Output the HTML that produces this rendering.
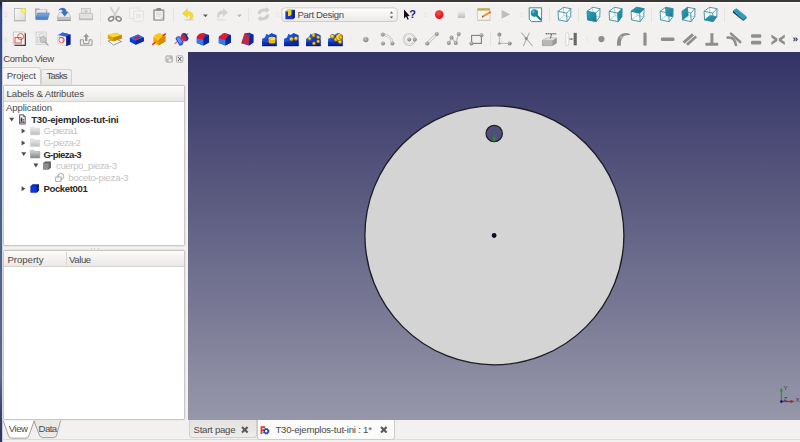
<!DOCTYPE html>
<html lang="es">
<head>
<meta charset="utf-8">
<title>FreeCAD - T30-ejemplos-tut-ini</title>
<style>
html,body{margin:0;padding:0;}
body{width:800px;height:442px;overflow:hidden;position:relative;background:#f2f1f0;
 font-family:"Liberation Sans",sans-serif;font-size:9.6px;color:#4a4a4a;}
.abs{position:absolute;}
.t{position:absolute;white-space:nowrap;line-height:12px;height:12px;}
.b{font-weight:bold;color:#2b2b2b;}
.g{color:#c4c4c4;}
#topstrip{left:0;top:0;width:800px;height:2px;background:#3b3a36;}
#leftstrip{left:0;top:2px;width:2px;height:440px;background:linear-gradient(to bottom,#14204a 0%,#34487f 2%,#40568c 23%,#4a6088 45%,#526488 68%,#5a6a8c 85%,#3a4670 93%,#2b3560 100%);box-shadow:0.5px 0 0.6px rgba(80,100,150,0.5);}
#view3d{left:188.4px;top:52px;width:611.6px;height:368px;
 background:linear-gradient(to bottom,#333366 0%,#9797aa 100%);}
.panel{position:absolute;background:#fff;border:1px solid #cbc8c3;box-sizing:border-box;border-radius:2px;box-shadow:0 0 0 0.6px #e0deda;}
.hdr{position:absolute;left:0;top:0;right:0;height:15px;background:linear-gradient(#fbfbfa,#ebe9e6);border-bottom:1px solid #d6d3ce;}
.sep{position:absolute;width:1px;height:14px;background:#dcdad6;}
.grip{position:absolute;width:2px;height:5px;border-top:1px solid #cfcdc9;border-bottom:1px solid #cfcdc9;}
.grip:after{content:"";position:absolute;left:0;top:2px;width:2px;height:1px;background:#cfcdc9;}
.ic{position:absolute;width:16px;height:16px;overflow:visible;}
</style>
</head>
<body>
<div id="topstrip" class="abs"></div>
<div class="abs" style="left:2px;top:2px;width:798px;height:1.5px;background:linear-gradient(#fcfcfc,#f2f1f0);"></div>
<div id="leftstrip" class="abs"></div>

<!-- TOOLBARS -->
<div id="toolbars" class="abs" style="left:0;top:0;width:800px;height:52px;">
<svg class="abs" style="left:0;top:0;" width="800" height="52" viewBox="0 0 800 52">
<defs>
 <linearGradient id="pg" x1="0" y1="0" x2="1" y2="1"><stop offset="0" stop-color="#fafafa"/><stop offset="1" stop-color="#dcdcdc"/></linearGradient>
 <linearGradient id="blu" x1="0" y1="0" x2="0" y2="1"><stop offset="0" stop-color="#7fb0e4"/><stop offset="1" stop-color="#3f78bd"/></linearGradient>
 <linearGradient id="gry" x1="0" y1="0" x2="0" y2="1"><stop offset="0" stop-color="#ececec"/><stop offset="1" stop-color="#b4b4b4"/></linearGradient>
 <linearGradient id="yel" x1="0" y1="0" x2="0" y2="1"><stop offset="0" stop-color="#ffe23a"/><stop offset="1" stop-color="#e0a800"/></linearGradient>
 <linearGradient id="teal" x1="0" y1="0" x2="1" y2="1"><stop offset="0" stop-color="#2fa3c0"/><stop offset="1" stop-color="#13788f"/></linearGradient>
 <linearGradient id="bb" x1="0" y1="0" x2="1" y2="1"><stop offset="0" stop-color="#2a7af0"/><stop offset="0.5" stop-color="#1040d0"/><stop offset="1" stop-color="#061a8a"/></linearGradient>
 <radialGradient id="gold" cx="0.4" cy="0.35" r="0.75"><stop offset="0" stop-color="#ffe94a"/><stop offset="1" stop-color="#c89200"/></radialGradient>
 <linearGradient id="cbg" x1="0" y1="0" x2="0" y2="1"><stop offset="0" stop-color="#ffffff"/><stop offset="1" stop-color="#ebe9e7"/></linearGradient>
 <radialGradient id="glow"><stop offset="0" stop-color="#ffffd0"/><stop offset="0.45" stop-color="#f4ea30"/><stop offset="1" stop-color="#f4ea30" stop-opacity="0"/></radialGradient>
 <radialGradient id="sph" cx="0.4" cy="0.35" r="0.7"><stop offset="0" stop-color="#c4c4c4"/><stop offset="1" stop-color="#7c7c7c"/></radialGradient>
 <radialGradient id="red" cx="0.4" cy="0.35" r="0.7"><stop offset="0" stop-color="#ff4a4a"/><stop offset="1" stop-color="#dc0a16"/></radialGradient>
 <g id="dot"><circle r="2" fill="url(#sph)"/></g>
 <!-- cube wireframe: origin = front-face top-left -->
 <g id="cubew" fill="none" stroke="#2a8ea6" stroke-width="0.9" stroke-linejoin="round">
  <path d="M0 4.2 L3.6 0 H13.4 V10 L10 14.2 H0.6 Z" fill="#ffffff"/>
  <path d="M0 4.2 H10.2 L10 14.2 M10.2 4.2 L13.4 0" />
  <path d="M3.6 0 L3.9 9.8 H13.4 M3.9 9.8 L0.6 14.2" stroke-width="0.6" stroke="#5fb0c2"/>
 </g>
<g id="grp"><rect x="0" y="0" width="2.4" height="0.9"/><rect x="0" y="1.9" width="2.4" height="0.9"/><rect x="0" y="3.8" width="2.4" height="0.9"/></g>
</defs>

<!-- separators -->
<g fill="#e6e4e1">
 <rect x="100" y="8" width="1" height="14"/><rect x="173" y="8" width="1" height="14"/><rect x="248" y="8" width="1" height="14"/>
 <rect x="549" y="8" width="1" height="14"/><rect x="578" y="8" width="1" height="14"/><rect x="651" y="8" width="1" height="14"/><rect x="724" y="8" width="1" height="14"/>
 <rect x="100" y="32" width="1" height="14"/><rect x="490" y="32" width="1" height="14"/>
</g>
<!-- grips -->

<use href="#grp" x="4.6" y="12.2" fill="#e0deda"/><use href="#grp" x="4.6" y="37" fill="#e0deda"/>
<use href="#grp" x="276.4" y="12.2" fill="#e8e6e3"/><use href="#grp" x="424.2" y="12.2" fill="#e8e6e3"/><use href="#grp" x="520.4" y="12.2" fill="#e8e6e3"/>
<use href="#grp" x="350" y="37" fill="#e8e6e3"/><use href="#grp" x="586" y="37" fill="#e8e6e3"/>

<!-- ROW 1 -->
<!-- new -->
<rect x="14.4" y="8.4" width="10.8" height="12.2" fill="url(#pg)" stroke="#a9a9a9" stroke-width="0.7"/>
<rect x="13.6" y="20.6" width="12.4" height="0.8" fill="#b5b5b5"/>
<circle cx="23.6" cy="10.6" r="3.6" fill="url(#glow)"/>
<!-- open -->
<path d="M35.2 8.6 h4 l1 1 h7 v9.6 h-12 z" fill="#9a9a9a"/>
<path d="M36.4 9.6 h10 v6 h-10 z" fill="#e8e8e8"/>
<path d="M37.6 13 h11.8 l-1.8 6.6 h-11.6 z" fill="url(#blu)" stroke="#3a6eae" stroke-width="0.5"/>
<!-- save -->
<path d="M59.600 12.400 h8.800 l2.400 5 h-13.600 z" fill="#ececec" stroke="#9c9c9c" stroke-width="0.500"/>
<rect x="57.200" y="17.400" width="13.600" height="3.400" fill="#b4b4b4"/>
<rect x="57.200" y="20.200" width="13.600" height="0.800" fill="#8a8a8a"/>
<rect x="58.400" y="18.400" width="11.200" height="0.700" fill="#d8d8d8"/>
<path d="M58 10.600 Q60.400 6.800 64.600 8.200 Q66.600 9.200 66.600 11.800 H68.600 L64.700 16.400 L60.800 11.800 H62.800 Q62.600 10 60.800 9.700 Q59.400 9.700 58 10.600 Z" fill="#3874bc"/>
<!-- print (disabled) -->
<g opacity="0.8">
<rect x="81.6" y="8.4" width="8.8" height="5" fill="#e4e4e4" stroke="#a8a8a8" stroke-width="0.6"/>
<path d="M79.4 13.4 h13.2 v6.4 h-13.2 z" fill="url(#gry)" stroke="#9a9a9a" stroke-width="0.6"/>
<rect x="80.4" y="16.6" width="11.2" height="1" fill="#f6f6f6"/>
<path d="M86 9.2 v3 m-1.4 -1.4 l1.4 1.6 l1.4 -1.6" stroke="#9a9a9a" stroke-width="0.7" fill="none"/>
</g>
<!-- cut -->
<g>
<path d="M110.800 7.800 L116.400 17 M119 7.800 L113.400 17" stroke="#dadada" stroke-width="2.200" stroke-linecap="round"/>
<path d="M110.800 7.800 L116.400 17 M119 7.800 L113.400 17" stroke="#c2c2c2" stroke-width="0.500"/>
<ellipse cx="111.200" cy="18.800" rx="2.700" ry="2" fill="none" stroke="#8a8a8a" stroke-width="1.500" transform="rotate(-30 111.200 18.800)"/>
<ellipse cx="118.600" cy="18.800" rx="2.700" ry="2" fill="none" stroke="#8a8a8a" stroke-width="1.500" transform="rotate(30 118.600 18.800)"/>
</g>
<!-- copy (disabled) -->
<g opacity="0.5">
<rect x="129.8" y="8" width="9.2" height="10.4" fill="#f6f6f6" stroke="#c0c0c0" stroke-width="0.6"/>
<path d="M133.8 11 h9.6 v8.2 l-2 2 h-7.6 z" fill="#f8f8f8" stroke="#b8b8b8" stroke-width="0.6"/>
<rect x="136" y="13.6" width="5.2" height="4.4" fill="#dedede"/>
</g>
<!-- paste -->
<rect x="153.2" y="9.2" width="11.2" height="11.6" rx="0.8" fill="#9c9c9c"/>
<rect x="154.8" y="11" width="8" height="8.4" fill="#f0f0f0"/>
<rect x="156.4" y="8" width="4.8" height="2.6" rx="0.8" fill="#8a8a8a"/>
<path d="M156.2 13 h5 M156.2 14.6 h5 M156.2 16.2 h4" stroke="#d0d0d0" stroke-width="0.7"/>
<path d="M162.8 16.8 v2.6 h-2.6 z" fill="#c4c4c4"/>
<!-- undo -->
<ellipse cx="189" cy="19.8" rx="5" ry="1.1" fill="#dcdad6"/>
<path d="M182.4 13.6 L187.4 8.8 V11.4 Q193.2 11.6 193 16.4 Q192.8 19.2 189.6 19.6 Q191.2 17.4 190 15.8 Q189 14.8 187.4 15 V17.6 Z" fill="#f3dc2e" stroke="#e6c820" stroke-width="0.5"/>
<path d="M203 14.400 h4.800 l-2.400 2.800 z" fill="#5c5b58"/>
<!-- redo (disabled) -->
<ellipse cx="221" cy="19.8" rx="5" ry="1" fill="#e6e4e1"/>
<path d="M228 12.6 L223 8.2 V10.6 Q217.2 10.8 217 15.4 Q217 17.6 219 18.2 Q218.6 16.2 220 15 Q221.2 14.2 223 14.4 V17 Z" fill="#d2d2d2"/>
<path d="M237 14.4 h4.8 l-2.4 2.8 z" fill="#b9b7b3"/>
<!-- refresh (disabled) -->
<g fill="#cecece">
<path d="M257.6 14 q0.4 -5.4 6 -5.6 h2.4 v-1.4 l3.6 3 l-3.6 3 v-1.6 h-2.4 q-2.6 0.2 -3 2.6 z"/>
<path d="M269.4 14.6 q-0.4 5.4 -6 5.6 h-2.4 v1.4 l-3.6 -3 l3.6 -3 v1.6 h2.4 q2.6 -0.2 3 -2.6 z"/>
</g>
<!-- combobox -->
<rect x="281.9" y="7.9" width="115.4" height="13.6" rx="3" fill="url(#cbg)" stroke="#c6c3be" stroke-width="0.8"/>
<path d="M285.4 11.6 l2 -1.8 h7.4 v7.6 l-2 1.8 h-7.4 z" fill="#1536c6"/>
<path d="M292.8 11.6 l2 -1.8 v7.6 l-2 1.8 z" fill="#081a80"/>
<path d="M285.4 11.6 l2 -1.8 h4 v5 l-1.4 1.2 h-2 v-4.4 z" fill="#f2d21c"/>
<path d="M389.8 13.6 l1.7 -2 l1.7 2 z M389.8 16.6 l1.7 2 l1.7 -2 z" fill="#5a5955"/>
<!-- whats this -->
<path d="M404 9.4 L404 18.4 L406 16.6 L407.6 19.8 L408.8 19.2 L407.4 16.2 L409.8 16 Z" fill="#101010"/>
<text x="409.200" y="18" font-family="Liberation Sans, sans-serif" font-weight="bold" font-size="11" fill="#1a1a8c">?</text>
<!-- record -->
<circle cx="439.2" cy="14.6" r="4.3" fill="url(#red)"/>
<!-- stop -->
<rect x="457.8" y="11.2" width="7.2" height="6.8" fill="url(#gry)" opacity="0.85"/>
<!-- macro edit -->
<rect x="477.4" y="8.6" width="12.6" height="11.8" rx="0.8" fill="#f4f3f0" stroke="#bab7b0" stroke-width="0.6"/>
<rect x="477.4" y="8.4" width="12.6" height="2.2" fill="#c7ab48"/>
<rect x="477" y="19.8" width="13.4" height="1" fill="#c9c7c2"/>
<path d="M481.6 17.6 l1 -2.2 l6.2 -3.6 l1.2 1.6 l-6.2 3.6 z" fill="#e79a2c"/>
<path d="M488.8 11.8 l1.2 -0.6 l1 1.6 l-1 0.6 z" fill="#d83a3a"/>
<path d="M481.6 17.6 l1 -2.2 l0.9 1.5 z" fill="#5a4a36"/>
<!-- play (disabled) -->
<path d="M501.6 10 L510.2 14.4 L501.6 18.8 Z" fill="#bdbdbd"/>
<!-- zoom fit -->
<path d="M529.2 7.8 H541.6 V21.6 H531.6 L529.2 19.2 Z" fill="#f6fbfc" stroke="#23849c" stroke-width="0.9"/>
<path d="M537 15.8 L540.4 19.4" stroke="#13788f" stroke-width="2" stroke-linecap="round"/>
<circle cx="534.4" cy="13" r="3.7" fill="url(#teal)"/>
<circle cx="533.4" cy="11.8" r="1.2" fill="#6cc6da" opacity="0.8"/>
<!-- view cubes -->
<path d="M558.0 11.3 L563.4 7.3 L570.9 8.7 L570.7 16.7 L567.1 21.6 L558.5 19.9 Z" fill="#fdfefe" stroke="none"/>
<path d="M563.4 7.3 L564.0 15.6 L570.7 16.7 M564.0 15.6 L558.5 19.9" fill="none" stroke="#8dbcc8" stroke-width="0.7"/>
<path d="M558.0 11.3 L566.6 13.1 L567.1 21.6 L558.5 19.9 Z M558.0 11.3 L563.4 7.3 L570.9 8.7 L570.7 16.7 L567.1 21.6 M566.6 13.1 L570.9 8.7" fill="none" stroke="#3a8ca2" stroke-width="0.9" stroke-linejoin="round"/>
<path d="M587.1 11.3 L592.5 7.3 L600.0 8.7 L599.8 16.7 L596.2 21.6 L587.6 19.9 Z" fill="#fdfefe" stroke="none"/>
<path d="M592.5 7.3 L593.1 15.6 L599.8 16.7 M593.1 15.6 L587.6 19.9" fill="none" stroke="#8dbcc8" stroke-width="0.7"/>
<path d="M587.1 11.3 L595.7 13.1 L596.2 21.6 L587.6 19.9 Z M587.1 11.3 L592.5 7.3 L600.0 8.7 L599.8 16.7 L596.2 21.6 M595.7 13.1 L600.0 8.7" fill="none" stroke="#3a8ca2" stroke-width="0.9" stroke-linejoin="round"/>
<path d="M587.1 11.3 L595.7 13.1 L596.2 21.6 L587.6 19.9 Z" fill="url(#teal)" stroke="#1d7f97" stroke-width="0.5"/>
<path d="M609.1 11.3 L614.5 7.3 L622.0 8.7 L621.8 16.7 L618.2 21.6 L609.6 19.9 Z" fill="#fdfefe" stroke="none"/>
<path d="M614.5 7.3 L615.1 15.6 L621.8 16.7 M615.1 15.6 L609.6 19.9" fill="none" stroke="#8dbcc8" stroke-width="0.7"/>
<path d="M609.1 11.3 L617.7 13.1 L618.2 21.6 L609.6 19.9 Z M609.1 11.3 L614.5 7.3 L622.0 8.7 L621.8 16.7 L618.2 21.6 M617.7 13.1 L622.0 8.7" fill="none" stroke="#3a8ca2" stroke-width="0.9" stroke-linejoin="round"/>
<path d="M617.7 13.1 L622.0 8.7 L621.8 16.7 L618.2 21.6 Z" fill="url(#teal)" stroke="#1d7f97" stroke-width="0.5"/>
<path d="M631.1 11.3 L636.5 7.3 L644.0 8.7 L643.8 16.7 L640.2 21.6 L631.6 19.9 Z" fill="#fdfefe" stroke="none"/>
<path d="M636.5 7.3 L637.1 15.6 L643.8 16.7 M637.1 15.6 L631.6 19.9" fill="none" stroke="#8dbcc8" stroke-width="0.7"/>
<path d="M631.1 11.3 L639.7 13.1 L640.2 21.6 L631.6 19.9 Z M631.1 11.3 L636.5 7.3 L644.0 8.7 L643.8 16.7 L640.2 21.6 M639.7 13.1 L644.0 8.7" fill="none" stroke="#3a8ca2" stroke-width="0.9" stroke-linejoin="round"/>
<path d="M631.1 11.3 L639.7 13.1 L644.0 8.7 L636.5 7.3 Z" fill="url(#teal)" stroke="#1d7f97" stroke-width="0.5"/>
<path d="M660.1 11.3 L665.5 7.3 L673.0 8.7 L672.8 16.7 L669.2 21.6 L660.6 19.9 Z" fill="#fdfefe" stroke="none"/>
<path d="M665.5 7.3 L666.1 15.6 L672.8 16.7 M666.1 15.6 L660.6 19.9" fill="none" stroke="#8dbcc8" stroke-width="0.7"/>
<path d="M665.5 7.3 L673.0 8.7 L672.8 16.7 L666.1 15.6 Z" fill="url(#teal)" stroke="#1d7f97" stroke-width="0.5"/>
<path d="M660.1 11.3 L668.7 13.1 L669.2 21.6 L660.6 19.9 Z M660.1 11.3 L665.5 7.3 L673.0 8.7 L672.8 16.7 L669.2 21.6 M668.7 13.1 L673.0 8.7" fill="none" stroke="#3a8ca2" stroke-width="0.9" stroke-linejoin="round"/>
<path d="M682.1 11.3 L687.5 7.3 L695.0 8.7 L694.8 16.7 L691.2 21.6 L682.6 19.9 Z" fill="#fdfefe" stroke="none"/>
<path d="M687.5 7.3 L688.1 15.6 L694.8 16.7 M688.1 15.6 L682.6 19.9" fill="none" stroke="#8dbcc8" stroke-width="0.7"/>
<path d="M682.1 11.3 L687.5 7.3 L688.1 15.6 L682.6 19.9 Z" fill="url(#teal)" stroke="#1d7f97" stroke-width="0.5"/>
<path d="M682.1 11.3 L690.7 13.1 L691.2 21.6 L682.6 19.9 Z M682.1 11.3 L687.5 7.3 L695.0 8.7 L694.8 16.7 L691.2 21.6 M690.7 13.1 L695.0 8.7" fill="none" stroke="#3a8ca2" stroke-width="0.9" stroke-linejoin="round"/>
<path d="M704.1 11.3 L709.5 7.3 L717.0 8.7 L716.8 16.7 L713.2 21.6 L704.6 19.9 Z" fill="#fdfefe" stroke="none"/>
<path d="M709.5 7.3 L710.1 15.6 L716.8 16.7 M710.1 15.6 L704.6 19.9" fill="none" stroke="#8dbcc8" stroke-width="0.7"/>
<path d="M704.6 19.9 L713.2 21.6 L716.8 16.7 L710.1 15.6 Z" fill="url(#teal)" stroke="#1d7f97" stroke-width="0.5"/>
<path d="M704.1 11.3 L712.7 13.1 L713.2 21.6 L704.6 19.9 Z M704.1 11.3 L709.5 7.3 L717.0 8.7 L716.8 16.7 L713.2 21.6 M712.7 13.1 L717.0 8.7" fill="none" stroke="#3a8ca2" stroke-width="0.9" stroke-linejoin="round"/>
<!-- measure -->
<path d="M733 10.6 L736.4 8.2 L746.4 16.2 L743 19.4 Z" fill="#2f9dbb"/>
<path d="M733 10.6 L743 19.4 L743.4 21 L732.8 12.4 Z" fill="#1c3c46"/>
<path d="M743 19.4 L746.4 16.2 L746.6 18 L743.4 21 Z" fill="#14677c"/>
<!-- ROW 2 -->
<!-- new sketch -->
<rect x="14.4" y="33" width="11.6" height="13" rx="1" fill="#3a3a3a"/>
<rect x="13.4" y="32" width="11.4" height="12.8" rx="0.8" fill="#f4f4f4" stroke="#9a9a9a" stroke-width="0.5"/>
<g fill="none" stroke="#e8402c" stroke-width="0.9"><rect x="15" y="37.6" width="6.2" height="5.4"/><circle cx="20.6" cy="36.6" r="3"/></g>
<!-- view sketch (disabled) -->
<rect x="36" y="32" width="10.4" height="12.4" fill="#ececec" stroke="#c4c4c4" stroke-width="0.6"/>
<g fill="none" stroke="#cfcfcf" stroke-width="0.8"><rect x="37.4" y="37.4" width="4.6" height="4.6"/><circle cx="41.6" cy="36" r="2.6"/></g>
<circle cx="43" cy="39.6" r="3.1" fill="#c8c8c8" stroke="#a8a8a8" stroke-width="0.7"/>
<path d="M45.2 42 L48 45.2" stroke="#a0a0a0" stroke-width="1.2" stroke-linecap="round"/>
<!-- map sketch -->
<path d="M62.4 32.6 L70.4 34.6 V44.4 L66 46 L62.4 44 Z" fill="#0b2fc0"/>
<path d="M57.4 35.2 L62.4 32.6 L70.4 34.6 L65.6 36.8 Z" fill="#2e62e6"/>
<path d="M66 36.8 L70.4 34.6 V44.4 L66 46 Z" fill="#061f8c"/>
<path d="M57.4 35.2 L66 36.8 V46 L57.8 43.4 Z" fill="#f6f6f6" stroke="#bbb" stroke-width="0.4"/>
<g fill="none" stroke="#e8402c" stroke-width="0.8"><circle cx="61.6" cy="40" r="2.7"/><path d="M58.6 37 l4.6 1.2 v4.2"/></g>
<!-- leave sketch -->
<path d="M80.4 39.8 h3 v3.8 h5.6 v-3.8 h3 v5.4 h-11.6 z" fill="#f2f2f2" stroke="#8e8e8e" stroke-width="0.9" stroke-linejoin="round"/>
<path d="M86.2 33.6 l3 3.4 h-1.8 v4 h-2.4 v-4 h-1.8 z" fill="#9c9c9c"/>
<!-- pad -->
<path d="M108.2 41 L116 38.8 L121.4 41.6 L113.6 45 Z" fill="#ffffff" stroke="#555" stroke-width="0.6"/>
<path d="M107.8 35 L116 32.8 L121.6 35 V38.6 L113.4 41.4 L107.8 38.8 Z" fill="#e0a400"/>
<path d="M107.8 35 L116 32.8 L121.6 35 L113.4 37.6 Z" fill="#ffd92e"/>
<path d="M113.4 37.6 L121.6 35 V38.6 L113.4 41.4 Z" fill="#c48800"/>
<!-- pocket -->
<path d="M129.8 38 L138 34.6 L143.8 37.4 V41.2 L135.6 44.8 L129.8 41.8 Z" fill="#0e3bd0"/>
<path d="M129.8 38 L138 34.6 L143.8 37.4 L135.6 40.8 Z" fill="#2f6cf0"/>
<path d="M135.6 40.8 L143.8 37.4 V41.2 L135.6 44.8 Z" fill="#082a9c"/>
<path d="M133.6 37.8 L138 36 L140.4 37.4 L136 39.4 Z" fill="#e01a2a"/>
<!-- revolution -->
<path d="M152.4 44.6 L165.6 33.8" stroke="#f01818" stroke-width="1.1"/>
<path d="M153.4 37.6 Q155 33.6 160.4 33.6 L165.4 36.2 V41.6 L158.6 45.4 L153.4 42.6 Z" fill="#f0a800"/>
<path d="M153.4 37.6 Q155 33.6 160.4 33.6 L165.4 36.2 Q160.4 36.4 158.6 40.4 Z" fill="#ffc81e"/>
<path d="M158.6 40.4 Q160.4 36.4 165.4 36.2 V41.6 L158.6 45.4 Z" fill="#d48c00"/>
<path d="M152.4 44.6 L155.4 42.2 M162.6 36.2 L165.6 33.8" stroke="#f01818" stroke-width="1.1"/>
<!-- groove -->
<path d="M174.6 43.6 L188.2 33.6" stroke="#f01818" stroke-width="1"/>
<path d="M175.4 38.6 Q177 35.4 180 36.4 L183.6 42 Q183 45.6 179.6 45.8 Z" fill="#1c50d8"/>
<path d="M176.6 38.4 Q178 36.6 179.6 37.4 L182.2 41.6 Q181.8 43.8 179.8 44 Z" fill="#5c94f4"/>
<path d="M181.4 34.4 Q183.4 32.2 186 33.6 L188.6 38 Q188.4 41 185.6 41.4 Z" fill="#0e36b4"/>
<path d="M180.4 36.6 Q181.6 33.6 184 34.4 L186.6 39 Q186 41.6 183.4 41.6 Z" fill="#e01a2a"/>
<!-- fillet -->
<g id="bcube">
<path d="M196.8 36.4 L203 33 L209 35 V42.6 L203.4 45.4 L196.8 43 Z" fill="#0e3bd0"/>
<path d="M203.4 38.4 L209 35 V42.6 L203.4 45.4 Z" fill="#08289a"/>
<path d="M196.8 38 L203.4 39.4 V45.4 L196.8 43 Z" fill="#2f7cf0"/>
</g>
<path d="M196.8 38.6 Q196.8 34.4 201 33.2 L206.4 34.2 Q203.6 35.6 203.4 39.8 Z" fill="#e01a2a"/>
<!-- chamfer -->
<use href="#bcube" x="22"/>
<path d="M218.8 38.6 L222.6 33.2 L228.6 34.4 L225.4 39.8 Z" fill="#e81a24"/>
<!-- draft -->
<path d="M245 33.2 L249.6 32.8 L253.4 34.6 V42.4 L249 45.4 L241.4 43.2 Z" fill="#0e3bd0"/>
<path d="M249.6 35 L253.4 34.6 V42.4 L249 45.4 Z" fill="#08289a"/>
<path d="M244.4 33.4 L249.6 35 L248.6 45 L241.4 43 Z" fill="#c02a44"/>
<!-- mirrored -->
<g id="bbase">
<path d="M262.100 38.800 L265 37.600 L266.400 33.800 L268.600 35 L271.600 33 L276.600 35.200 V46 H262.100 Z" fill="url(#bb)"/>
<path d="M262.100 41.600 Q269 44 276.600 40.600 V46 H262.100 Z" fill="#0a249c" opacity="0.8"/>
<path d="M262.100 45.400 H276.600 V46.200 H262.100 Z" fill="#04155c"/>
</g>
<path d="M268.6 38.4 a3.4 1.6 0 0 1 6.800 0 v3.600 a3.400 1.600 0 0 1 -6.800 0 z" fill="#e8c000"/>
<ellipse cx="272" cy="38.400" rx="3.400" ry="1.600" fill="#ffe640"/>
<path d="M263 45 L275.600 34.600" stroke="#e02a3a" stroke-width="0.6" stroke-dasharray="1.4 1"/>
<!-- linear pattern -->
<use href="#bbase" x="22"/>
<g fill="url(#gold)" stroke="#7c5e00" stroke-width="0.5"><circle cx="291.400" cy="39" r="2"/><circle cx="296" cy="38.400" r="2"/></g>
<!-- polar pattern -->
<use href="#bbase" x="44"/>
<g fill="url(#gold)" stroke="#7c5e00" stroke-width="0.5"><circle cx="309.600" cy="38.600" r="1.700"/><circle cx="313.600" cy="35.400" r="1.700"/><circle cx="318.200" cy="37.200" r="1.700"/><circle cx="318.200" cy="41.400" r="1.700"/><circle cx="314" cy="43.400" r="1.700"/></g>
<!-- multitransform -->
<use href="#bbase" x="66"/>
<g fill="url(#gold)" stroke="#7c5e00" stroke-width="0.5"><circle cx="332.400" cy="36.400" r="2"/><circle cx="336" cy="39.400" r="2"/><circle cx="340" cy="41.800" r="2"/><path d="M336 35.400 l3.200 -2 l3.200 2 v3.600 l-3.200 1.600 l-3.200 -1.600 z" fill="#ffdc1e"/><circle cx="340.600" cy="37.400" r="1.800"/></g>
<!-- point -->
<circle cx="365.800" cy="39.600" r="2.700" fill="url(#sph)"/>
<!-- arc -->
<path d="M383 34.800 Q391.600 35.400 392.200 43" fill="none" stroke="#c2c2c2" stroke-width="2.400"/><path d="M383 34.800 Q391.600 35.400 392.200 43" fill="none" stroke="#f4f4f4" stroke-width="1.100"/>
<use href="#dot" x="382.800" y="34.600"/><use href="#dot" x="383" y="43.400"/><use href="#dot" x="392.400" y="43.400"/>
<!-- circle -->
<circle cx="409.200" cy="39.400" r="5.400" fill="none" stroke="#c0c0c0" stroke-width="2.200"/><circle cx="409.200" cy="39.400" r="5.400" fill="none" stroke="#f4f4f4" stroke-width="1"/>
<use href="#dot" x="409.200" y="39.400"/><use href="#dot" x="414.800" y="39.400"/>
<!-- line -->
<path d="M427.400 43.200 L436.600 34.200" stroke="#bcbcbc" stroke-width="2.600"/><path d="M427.400 43.200 L436.600 34.200" stroke="#f4f4f4" stroke-width="1.200"/>
<use href="#dot" x="427.200" y="43.400"/><use href="#dot" x="436.800" y="34"/>
<!-- polyline -->
<path d="M448.800 43 L451.500 37.600 L455.800 43 L458.700 34" fill="none" stroke="#c4c4c4" stroke-width="1.500"/>
<use href="#dot" x="448.800" y="43"/><use href="#dot" x="451.500" y="37.600"/><use href="#dot" x="455.800" y="43"/><use href="#dot" x="458.700" y="34"/>
<!-- rectangle -->
<rect x="471.600" y="35.400" width="9.800" height="8" fill="none" stroke="#7e7e7e" stroke-width="1.100"/>
<use href="#dot" x="471.400" y="43.400"/><use href="#dot" x="481.400" y="35.200"/>
<!-- axis/fix -->
<path d="M499.400 35 V43.400 H509" fill="none" stroke="#b8b8b8" stroke-width="1"/>
<path d="M499.400 36 L503 43.400" stroke="#d8d8d8" stroke-width="0.700"/>
<use href="#dot" x="499.400" y="34.600"/><use href="#dot" x="509.600" y="43.400"/><circle cx="499.400" cy="43.400" r="1.200" fill="#9a9a9a"/>
<path d="M499.400 32.400 l1.400 2 h-2.800 z M512 43.400 l-2 -1.400 v2.800 z" fill="#8c8c8c"/>
<!-- trim -->
<path d="M521.400 32.600 L532.600 46 M529.400 32.600 L523.400 46" stroke="#aeaeae" stroke-width="1.100"/>
<circle cx="526.200" cy="38.600" r="1.500" fill="#8c8c8c"/>
<!-- box with dim -->
<path d="M542.400 40.600 L546.600 38 H556.400 V43.200 L552.400 45.600 H542.400 Z" fill="#9a9a9a" stroke="#7a7a7a" stroke-width="0.500"/>
<path d="M542.400 40.600 L546.600 38 H556.400 L552.400 40.600 Z" fill="#dcdcdc"/>
<path d="M542.400 40.600 H552.400 V45.600 H542.400 Z" fill="#b6b6b6"/>
<path d="M545.600 33.800 H556.200" stroke="#3c3c3c" stroke-width="1" stroke-dasharray="1.400 0.500"/>
<path d="M551.600 34 L550.400 38.400" stroke="#4a4a4a" stroke-width="0.800"/>
<!-- H -->
<rect x="565.800" y="32.800" width="3" height="12.600" rx="0.600" fill="#fafafa" stroke="#c2c2c2" stroke-width="0.600"/>
<rect x="573.600" y="32.800" width="3.200" height="12.600" fill="#7c7c7c"/>
<path d="M574 34.400 h2.400 M574 36.400 h2.400 M574 38.400 h2.400 M574 40.400 h2.400 M574 42.400 h2.400 M574 44.400 h2.400" stroke="#4c4c4c" stroke-width="0.700"/>
<path d="M569 39.100 H573.600" stroke="#8c8c8c" stroke-width="0.900"/><circle cx="571.300" cy="39.100" r="0.900" fill="#7c7c7c"/>
<!-- constraint icons -->
<g fill="#8e8e8e" stroke="none">
<circle cx="601.400" cy="39.100" r="3.100"/>
<path d="M617 45.800 Q616.200 33.200 626.400 33 Q629.600 33 630.400 35 Q627.600 34.800 625 35.400 Q620.600 37 620.800 45.800 Z"/>
<rect x="643.400" y="32.600" width="3.200" height="13.200" rx="1.200"/>
<rect x="660.900" y="37.500" width="13.600" height="3.400" rx="1.200"/>
<path d="M682.600 41.600 L692 33.200 L694 35.400 L684.600 43.800 Z M686 43.800 L695.400 35.600 L697 37.600 L688 45.800 Z"/>
<rect x="710.400" y="33.200" width="3" height="10.600"/><rect x="705.300" y="42.800" width="13" height="2.900" rx="1"/>
<path d="M731 33.600 L740.200 42" fill="none" stroke="#8e8e8e" stroke-width="2.600" stroke-linecap="round"/><path d="M727.600 37.600 Q734.400 36.600 736 45" fill="none" stroke="#8e8e8e" stroke-width="2.600" stroke-linecap="round"/>
<rect x="751" y="34.200" width="10.200" height="3.500" rx="1"/><rect x="751" y="40.800" width="10.200" height="3.700" rx="1"/>
<path d="M771.400 34.600 L777.400 38.600 V41 L771.400 45 V42 L774.600 39.800 L771.400 37.600 Z M784.800 34.600 L778.800 38.600 V41 L784.800 45 V42 L781.600 39.800 L784.800 37.600 Z"/>
</g>
<circle cx="621.400" cy="37.200" r="1.500" fill="#b0b0b0"/>
<text x="792.600" y="42.400" font-family="Liberation Sans, sans-serif" font-weight="bold" font-size="10" fill="#2e2e2e" style="text-rendering:geometricPrecision">»</text>
</svg>
<span class="t" id="tx_pd" style="left:297.6px;top:8.8px;letter-spacing:-0.37px;">Part Design</span>
</div>

<!-- COMBO VIEW -->
<div id="combo" class="abs" style="left:2px;top:52px;width:184px;height:390px;">
 <span class="t" id="tx_combo" style="left:1.3px;top:1px;font-size:9.6px;letter-spacing:-0.36px;">Combo View</span>
 <!-- float / close buttons -->
 <svg class="abs" style="left:163px;top:3px;" width="20" height="9" viewBox="0 0 20 9">
  <rect x="0.300" y="0.200" width="7.600" height="7.600" rx="1.800" fill="#b9b9b9"/>
  <path d="M1.800 1.800 h2.600 v2 h-2.600 z M3.600 4.200 h2.800 v2.200 h-2.800 z" fill="#f4f4f4"/>
  <path d="M2.600 2.600 h1.800 v1.200 h-1.800 z" fill="#b9b9b9" opacity="0.600"/>
  <rect x="11" y="0.200" width="7.400" height="7.600" rx="1.800" fill="#b4b4b4"/>
  <rect x="12" y="1.200" width="5.400" height="5.600" rx="0.800" fill="#f0f0f0"/>
  <path d="M13 2 L16.400 6 M16.400 2 L13 6" stroke="#5a5a5a" stroke-width="1" fill="none"/>
 </svg>
 <!-- tabs -->
 <div class="abs" style="left:39px;top:17px;width:31px;height:16px;box-sizing:border-box;border:1px solid #d4d1cc;border-bottom:none;border-radius:3px 3px 0 0;background:linear-gradient(#f4f3f1,#e6e4e1);"></div>
 <div class="abs" style="left:0px;top:15px;width:39px;height:18px;box-sizing:border-box;border:1px solid #d4d1cc;border-bottom:none;border-radius:3px 3px 0 0;background:#f7f6f5;"></div>
 <span class="t" id="tx_project" style="left:4.8px;top:18px;letter-spacing:-0.11px;">Project</span>
 <span class="t" id="tx_tasks" style="left:44.5px;top:18px;letter-spacing:-0.85px;">Tasks</span>
 <!-- tree panel -->
 <div class="panel" style="left:1px;top:33px;width:182px;height:161px;">
  <div class="hdr"></div>
 </div>
 <span class="t" id="tx_labels" style="left:4.5px;top:36.4px;letter-spacing:-0.14px;">Labels &amp; Attributes</span>
 <span class="t" id="tx_app" style="left:3.9px;top:49.6px;letter-spacing:-0.08px;">Application</span>
 <span class="t b" id="tx_t30" style="left:29.2px;top:61.6px;letter-spacing:-0.19px;">T30-ejemplos-tut-ini</span>
 <span class="t g" id="tx_g1" style="left:41.4px;top:73.4px;letter-spacing:-0.62px;">G-pieza1</span>
 <span class="t g" id="tx_g2" style="left:41.4px;top:85.2px;letter-spacing:-0.57px;">G-pieza-2</span>
 <span class="t b" id="tx_g3" style="left:41.4px;top:96.5px;letter-spacing:-0.62px;">G-pieza-3</span>
 <span class="t g" id="tx_cuerpo" style="left:54px;top:107.8px;letter-spacing:-0.38px;">cuerpo_pieza-3</span>
 <span class="t g" id="tx_boceto" style="left:66.3px;top:119.8px;letter-spacing:-0.25px;">boceto-pieza-3</span>
 <span class="t b" id="tx_pocket" style="left:41.4px;top:131.1px;letter-spacing:-0.38px;">Pocket001</span>
 <!-- tree arrows & icons -->
 <svg class="abs" style="left:0;top:58px;" width="70" height="90" viewBox="2 110 70 90">
  <g fill="#4e4d4a">
   <path d="M9.200 117.800 h5 l-2.500 3.800 z"/>
   <path d="M21.600 128.600 v5 l3.800 -2.500 z"/>
   <path d="M21.600 140.400 v5 l3.800 -2.500 z"/>
   <path d="M21.200 152.200 h5 l-2.500 3.800 z"/>
   <path d="M33.400 163.600 h5 l-2.500 3.800 z"/>
   <path d="M21.600 186.200 v5 l3.800 -2.500 z"/>
  </g>
  <!-- doc icon -->
  <path d="M19.600 114.800 h3.800 l1.800 1.800 v7.400 h-5.600 z" fill="#f6f6f6" stroke="#2e2e2e" stroke-width="0.800"/>
  <path d="M23.400 114.800 v1.800 h1.800" fill="none" stroke="#2e2e2e" stroke-width="0.600"/>
  <rect x="20.600" y="117.600" width="1.800" height="5.400" fill="#444"/>
  <rect x="22.600" y="119" width="1.600" height="1.600" fill="#666"/>
  <rect x="22.500" y="121.200" width="1.900" height="2" fill="#c0307a"/>
  <rect x="20.600" y="121.800" width="1.600" height="1.400" fill="#2a8ad0"/>
  <!-- folders -->
  <defs>
   <linearGradient id="fg" x1="0" y1="0" x2="0" y2="1"><stop offset="0" stop-color="#ececec"/><stop offset="1" stop-color="#bdbdbd"/></linearGradient>
   <linearGradient id="fd" x1="0" y1="0" x2="0" y2="1"><stop offset="0" stop-color="#d6d6d6"/><stop offset="1" stop-color="#858585"/></linearGradient>
  </defs>
  <path d="M30.400 127.200 h3.200 l0.800 1 h5.400 v6.600 h-9.400 z" fill="url(#fg)" stroke="#cfcfcf" stroke-width="0.500"/>
  <path d="M30.400 139 h3.200 l0.800 1 h5.400 v6.600 h-9.400 z" fill="url(#fg)" stroke="#cfcfcf" stroke-width="0.500"/>
  <path d="M30.400 150.400 h3.200 l0.800 1 h5.400 v6.600 h-9.400 z" fill="url(#fd)" stroke="#969696" stroke-width="0.500"/>
  <!-- grey cube -->
  <path d="M43 163.200 l2 -1.800 h5.800 v6.200 l-2 1.800 h-5.800 z" fill="#5c5c5c"/>
  <path d="M43 163.200 h5.800 v6.200 h-5.800 z" fill="#8e8e8e"/>
  <path d="M48.800 163.200 l2 -1.800 v6.200 l-2 1.800 z" fill="#6a6a6a"/>
  <!-- sketch icon -->
  <g fill="#fafafa" stroke="#a6a6a6" stroke-width="0.900">
   <circle cx="60.800" cy="176.400" r="3"/>
   <path d="M55.600 177 h5.600 v4.400 h-5.600 z"/>
   <path d="M58 177 a3 3 0 0 1 1.200 -2.600" fill="none"/>
  </g>
  <!-- blue cube -->
  <path d="M30.600 186 l2 -1.800 h6.200 v6.400 l-2 1.800 h-6.200 z" fill="#14248c"/>
  <path d="M30.600 186 h6.200 v6.400 h-6.200 z" fill="#0a36e6"/>
  <path d="M36.800 186 l2 -1.800 v6.400 l-2 1.800 z" fill="#061a78"/>
 </svg>
 <!-- splitter handle -->
 <div class="abs" style="left:89px;top:196px;width:6px;height:1px;border-left:1px solid #c9c6c1;border-right:1px solid #c9c6c1;"><div style="width:1px;height:1px;background:#c9c6c1;margin-left:2px"></div></div>
 <!-- property panel -->
 <div class="panel" style="left:1px;top:198px;width:182px;height:170px;">
  <div class="hdr" style="height:15px;"></div>
  <div class="abs" style="left:62px;top:1px;width:1px;height:13px;background:#d9d6d1;"></div>
 </div>
 <span class="t" id="tx_prop" style="left:5.5px;top:202.2px;letter-spacing:-0.04px;">Property</span>
 <span class="t" id="tx_value" style="left:67px;top:202.2px;letter-spacing:-0.41px;">Value</span>
 <!-- view / data tabs -->
 <svg class="abs" style="left:0;top:368px;" width="70" height="20" viewBox="2 420 70 20">
  <path d="M33.8 420.6 L39.6 435.6 Q40.6 437.6 42.6 437.6 H53.6 Q55.8 437.6 56.6 435.4 L60.6 420.6" fill="#ebe9e6" stroke="#8e8b86" stroke-width="0.8"/>
  <path d="M3.2 420.6 L8.6 436 Q9.4 438.2 11.4 438.2 H26 Q28 438.2 28.8 436 L34.2 420.6" fill="#ffffff" stroke="#8e8b86" stroke-width="0.8"/>
 </svg>
 <span class="t" id="tx_view" style="left:6.7px;top:371.4px;letter-spacing:-0.44px;">View</span>
 <span class="t" id="tx_data" style="left:36.6px;top:371.4px;letter-spacing:-0.56px;">Data</span>
 <div class="abs" style="left:0;top:387px;width:184px;height:1px;background:#dedcd8;"></div>
</div>

<!-- 3D VIEW -->
<div id="view3d" class="abs">
<svg width="611" height="368" viewBox="189 52 611 368" style="position:absolute;left:0.6px;top:0;">
 <circle cx="494.4" cy="235.3" r="129.5" fill="#d4d4d4" stroke="#1c1c22" stroke-width="1.3"/>
 <circle cx="494.2" cy="133.5" r="8.2" fill="#4f4f7d" stroke="#1c1c22" stroke-width="1.2"/>
 <path d="M494.2 130.4 L494.5 136 L495.9 141.2 L492.5 141.2 L493.9 136 Z" fill="#2c8c2c"/>
 <circle cx="494.1" cy="235.5" r="2.4" fill="#0b0b22"/>
 <!-- axis cross -->
 <path d="M781.4 401.5 V389" stroke="#18a018" stroke-width="1.2"/>
 <path d="M781.4 387.6 l1.5 4 h-3 z" fill="#18a018"/>
 <path d="M781.4 401.5 H793" stroke="#b02020" stroke-width="1.2"/>
 <path d="M794.6 401.5 l-4 -1.5 v3 z" fill="#b02020"/>
 <path d="M781.4 399.7 l1.8 1.8 l-1.8 1.8 l-1.8 -1.8 z" fill="#15158a"/>
 <text x="783.4" y="389.6" font-family="Liberation Sans, sans-serif" font-size="6.2" fill="#3a3a48">Y</text>
 <text x="783.4" y="401.2" font-family="Liberation Sans, sans-serif" font-size="6.2" fill="#3a3a48">Z</text>
 <text x="795.4" y="401.6" font-family="Liberation Sans, sans-serif" font-size="6.2" fill="#3a3a48">X</text>
</svg>
</div>

<!-- BOTTOM TABS -->
<div id="btabs" class="abs" style="left:186px;top:420px;width:614px;height:22px;">
 <div class="abs" style="left:0;top:19px;width:614px;height:1px;background:#dddbd7;"></div>
 <div class="abs" style="left:3px;top:0;width:68px;height:18px;box-sizing:border-box;border:1px solid #d2cfca;border-top:none;border-radius:0 0 3px 3px;background:linear-gradient(#e4e2de,#efedeb);"></div>
 <div class="abs" style="left:70.500px;top:0;width:138px;height:20px;box-sizing:border-box;border:1px solid #cfccc7;border-top:none;border-radius:0 0 3px 3px;background:#fbfbfa;"></div>
 <span class="t" id="tx_start" style="left:7.500px;top:3.600px;letter-spacing:-0.25px;">Start page</span>
 <span class="t" id="tx_doc" style="left:89.400px;top:3.600px;letter-spacing:-0.22px;">T30-ejemplos-tut-ini : 1*</span>
 <svg class="abs" style="left:0;top:0;" width="214" height="22" viewBox="186 420 214 22">
  <g stroke="#5a5956" stroke-width="2.100" stroke-linecap="butt">
   <path d="M242 427 L247.600 432.600 M247.600 427 L242 432.600"/>
   <path d="M381 427 L386.600 432.600 M386.600 427 L381 432.600"/>
  </g>
  <!-- FreeCAD doc icon -->
  <path d="M260.600 426.200 h4.600 v1.800 h-2.800 v1.400 h2 v1.600 h-2 v3 h-1.800 z" fill="#e23a22"/>
  <circle cx="266.200" cy="431.200" r="2.500" fill="none" stroke="#1c3fb4" stroke-width="1.600" stroke-dasharray="1.300 0.660"/>
  <circle cx="266.200" cy="431.200" r="1.900" fill="none" stroke="#1c3fb4" stroke-width="1.200"/>
 </svg>
</div>

</body>
</html>
